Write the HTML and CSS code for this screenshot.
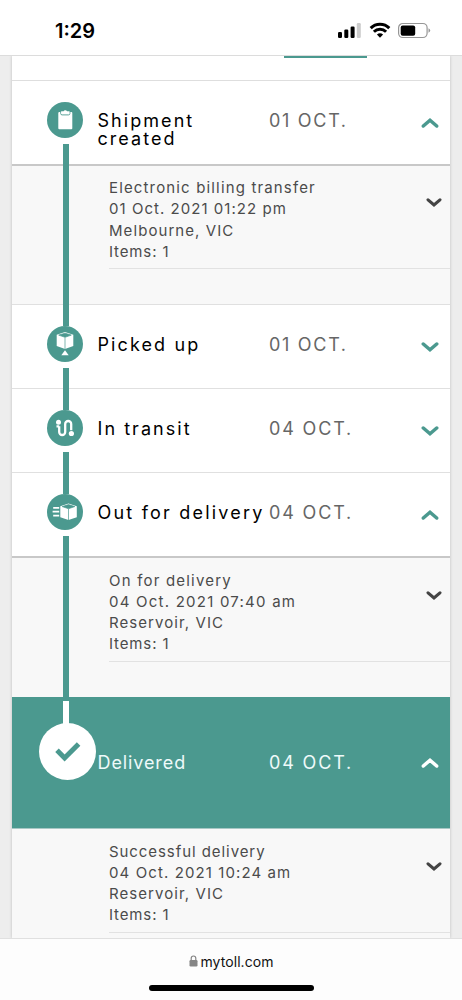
FILE: index.html
```html
<!DOCTYPE html>
<html lang="en">
<head>
<meta charset="utf-8">
<title>Shipment tracking</title>
<link rel="stylesheet" href="styles.css">
</head>
<body>
<svg class="defs" width="0" height="0">
  <symbol id="up" viewBox="0 0 18 12"><path d="M2.300 9 9 3.200 15.700 9" fill="none" stroke="currentColor" stroke-width="3.500" stroke-linecap="round"/></symbol>
  <symbol id="down" viewBox="0 0 18 12"><path d="M2.300 3 9 8.800 15.700 3" fill="none" stroke="currentColor" stroke-width="3.500" stroke-linecap="round"/></symbol>
</svg>
<header class="status">
  <span class="clock">1:29</span>
  <svg class="signals" width="94" height="18" viewBox="0 0 94 18">
    <g><rect x="1" y="10" width="4" height="6" rx="1.200"/><rect x="7.300" y="7.500" width="4" height="8.500" rx="1.200"/><rect x="13.600" y="4.500" width="4" height="11.500" rx="1.200"/><rect x="19.800" y="1" width="4" height="15" rx="1.200" fill="#ccc"/></g>
    <g fill="none" stroke="#000" stroke-width="3"><path d="M33.700 6.100a13.200 13.200 0 0 1 18.600 0"/><path d="M36.900 9.700a8.700 8.700 0 0 1 12.200 0"/></g>
    <path d="M43 15.700 39.900 12.600a4.500 4.500 0 0 1 6.200 0Z"/>
    <rect x="61.600" y="1.500" width="28.500" height="14" rx="4.200" fill="#fff" stroke="#969696" stroke-width="1.200"/>
    <rect x="63.700" y="3.400" width="14.500" height="10.300" rx="2"/>
    <path d="M91.500 6.300q1.700.7 1.700 2.200t-1.700 2.200Z" fill="#969696"/>
  </svg>
</header>
<main class="page">
  <div class="card">
    <div class="tabs"><span class="tab-active"></span></div>

    <section class="row open">
      <div class="mark"><svg class="icon" viewBox="0 0 36 36"><circle cx="18" cy="18" r="18" fill="#4b998f"/><rect x="11.300" y="10" width="14" height="17.300" rx="1" fill="#fff"/><path d="M13.700 9.400v2.100q0 1.400 1.400 1.400h6.400q1.400 0 1.400-1.400V9.400" fill="#fff" stroke="#4b998f" stroke-width=".9"/><path d="M14.300 11.700V9.500h2.200a1.900 1.900 0 0 1 3.600 0h2.200v2.200Z" fill="#fff"/></svg><i class="line long"></i></div>
      <h2 class="title shipment">Shipment<br>created</h2><span class="date d01">01 OCT.</span><svg class="chev"><use href="#up"/></svg>
    </section>
    <section class="details">
      <div class="event"><p class="s1">Electronic billing transfer</p><p class="s2">01 Oct. 2021 01:22 pm</p><p class="s3">Melbourne, VIC</p><p class="s4">Items: 1</p><svg class="chev small"><use href="#down"/></svg></div>
    </section>

    <section class="row">
      <div class="mark"><svg class="icon" viewBox="0 0 36 36"><circle cx="18" cy="18" r="18" fill="#4b998f"/><path d="M9.700 8.700 18 6l8.300 2.700v11.200L18 23l-8.300-3.100Z" fill="#fff"/><path d="M11.700 9.100 18 7.200l6.300 1.900L18 11.300ZM18 11.500V23" fill="#4b998f" stroke="#4b998f" stroke-width=".7"/><path d="m18 24.200 3.700 5h-7.400Z" fill="#fff"/></svg><i class="line"></i></div>
      <h2 class="title picked">Picked up</h2><span class="date d01">01 OCT.</span><svg class="chev"><use href="#down"/></svg>
    </section>
    <section class="row">
      <div class="mark"><svg class="icon" viewBox="0 0 36 36"><circle cx="18" cy="18" r="18" fill="#4b998f"/><path d="M12.200 16.300v5.700a3 3 0 0 0 6 0v-8a3 3 0 0 1 6 0v6.300M9.500 16.300h2.700" fill="none" stroke="#fff" stroke-width="2.300"/><circle cx="11.500" cy="12.200" r="2.500" fill="#fff"/><circle cx="24.400" cy="23.500" r="2.600" fill="#fff"/></svg><i class="line"></i></div>
      <h2 class="title transit">In transit</h2><span class="date d04">04 OCT.</span><svg class="chev"><use href="#down"/></svg>
    </section>
    <section class="row open">
      <div class="mark"><svg class="icon" viewBox="0 0 36 36"><circle cx="18" cy="18" r="18" fill="#4b998f"/><path d="M13.300 12.300 21.500 9.600l8.300 2.700v11L21.500 26l-8.200-2.700Z" fill="#fff"/><path d="m15.200 12.600 6.300-2 6.300 2-6.300 2.100ZM21.500 15v11" fill="#4b998f" stroke="#4b998f" stroke-width=".7"/><path d="M6.200 13.800h6M5.600 17.700h6.600M6.200 21.600h6" stroke="#fff" stroke-width="1.700"/></svg><i class="line mid"></i></div>
      <h2 class="title out">Out for delivery</h2><span class="date d04">04 OCT.</span><svg class="chev"><use href="#up"/></svg>
    </section>
    <section class="details second">
      <div class="event"><p class="s5">On for delivery</p><p class="s6">04 Oct. 2021 07:40 am</p><p class="s7">Reservoir, VIC</p><p class="s4">Items: 1</p><svg class="chev small"><use href="#down"/></svg></div>
    </section>

    <section class="row delivered">
      <div class="mark"><i class="line white"></i><svg class="done" viewBox="0 0 57 57"><circle cx="28.500" cy="28.500" r="28.500" fill="#fff"/><path d="m18 27.300 7.600 7.600 14-14" fill="none" stroke="#4b998f" stroke-width="5"/></svg></div>
      <h2 class="title del">Delivered</h2><span class="date d04">04 OCT.</span><svg class="chev"><use href="#up"/></svg>
    </section>
    <section class="details last">
      <div class="event"><p class="s8">Successful delivery</p><p class="s9">04 Oct. 2021 10:24 am</p><p class="s7">Reservoir, VIC</p><p class="s4">Items: 1</p><svg class="chev small"><use href="#down"/></svg></div>
    </section>
  </div>
</main>
<footer class="browser">
  <div class="address"><svg width="9" height="12" viewBox="0 0 9 12"><rect x=".5" y="5" width="8" height="6.500" rx="1.200" fill="#858585"/><path d="M2.200 5.500V3.300a2.300 2.300 0 0 1 4.600 0v2.200" fill="none" stroke="#858585" stroke-width="1.200"/></svg><span>mytoll.com</span></div>
  <div class="home"></div>
</footer>
</body>
</html>
```

FILE: styles.css
```css
* { box-sizing: border-box; }
body { margin: 0; width: 462px; height: 1000px; overflow: hidden; display: flex; flex-direction: column; background: #fff; font-family: Inter, "Liberation Sans", sans-serif; }
h2, p { margin: 0; font-weight: 400; white-space: nowrap; }
.defs { position: absolute; }
.status { flex: none; height: 56px; border-bottom: 1px solid #dcdcdc; display: flex; justify-content: space-between; padding: 20px 31px 0 55px; }
.clock { font-size: 20px; line-height: 22px; font-weight: 600; letter-spacing: 0; }
.signals { margin-top: 2px; }
.page { height: 882px; flex: none; overflow: hidden; background: #ededed; padding: 0 12px; }
.card { height: 882px; background: #fff; box-shadow: 0 0 3px rgba(0,0,0,.2); }
.tabs { height: 25px; border-bottom: 1px solid #dedede; padding-left: 272px; }
.tab-active { display: block; width: 83px; height: 2px; background: #4b998f; }
.row { height: 84px; border-bottom: 1px solid #e0e0e0; display: grid; grid-template-columns: 85.500px 171.500px 151px 20px; align-items: start; }
.row.open { height: 85px; border-bottom: 2px solid #c8c8c8; }
.mark { position: relative; padding: 20.500px 0 0 35px; }
.icon { display: block; width: 36px; height: 36px; }
.line { position: absolute; z-index: 2; left: 51px; top: 63px; width: 6px; height: 42px; background: #4b998f; }
.line.long { height: 182px; }
.line.mid { height: 165px; }
.title { font-size: 18px; line-height: 18px; padding-top: 31px; color: #000; }
.date { font-size: 18px; line-height: 18px; padding-top: 31px; color: #666; white-space: nowrap; }
.chev { width: 18px; height: 12px; margin: 36px 0 0 1px; color: #4b998f; }
.details { height: 139px; background: #f8f8f8; border-bottom: 1px solid #e0e0e0; padding-left: 97px; }
.details.second { height: 139px; border-bottom: 0; }
.details.last { height: 110px; border-bottom: 0; }
.event { position: relative; height: 103px; padding-top: 11px; border-bottom: 1px solid #e2e2e2; font-size: 15px; line-height: 21.300px; color: #4b4b4b; }
.second .event { height: 104px; padding-top: 11.500px; }
.last .event { height: 104px; padding-top: 12px; }
.chev.small { position: absolute; left: 316.500px; top: 31px; width: 16px; height: 11px; margin: 0; color: #444; }
.second .chev.small { top: 32px; }
.last .chev.small { top: 32px; }
.row.delivered { height: 131.500px; background: #4b998f; border-bottom: 1px solid #a8c8c5; }
.delivered .mark { padding: 25.500px 0 0 27px; }
.done { display: block; width: 57px; height: 57px; }
.line.white { background: #fff; top: 4px; height: 24px; }
.delivered .title, .delivered .date { color: #eefafa; padding-top: 57px; }
.delivered .chev { color: #fff; margin-top: 60px; }
.shipment { letter-spacing: 2.050px; }
.picked { letter-spacing: 2.100px; }
.transit { letter-spacing: 2.050px; }
.out { letter-spacing: 2.200px; }
.del { letter-spacing: .9px; }
.d01 { letter-spacing: 1.700px; }
.d04 { letter-spacing: 1.850px; }
.s1 { letter-spacing: 1.150px; }
.s2 { letter-spacing: 1.040px; }
.s3, .s7 { letter-spacing: 1.070px; }
.s4 { letter-spacing: .87px; }
.s5 { letter-spacing: 1.200px; }
.s6 { letter-spacing: 1.230px; }
.s8 { letter-spacing: .93px; }
.s9 { letter-spacing: 1.100px; }
.browser { height: 62px; flex: none; border-top: 1px solid #e0e0e0; background: #fdfdfd; display: flex; flex-direction: column; align-items: center; }
.address { display: flex; align-items: center; gap: 3px; margin-top: 13px; height: 18px; font-size: 14px; letter-spacing: .05px; color: #111; }
.home { width: 165px; height: 6px; border-radius: 3px; background: #000; margin-top: 15px; }
```
